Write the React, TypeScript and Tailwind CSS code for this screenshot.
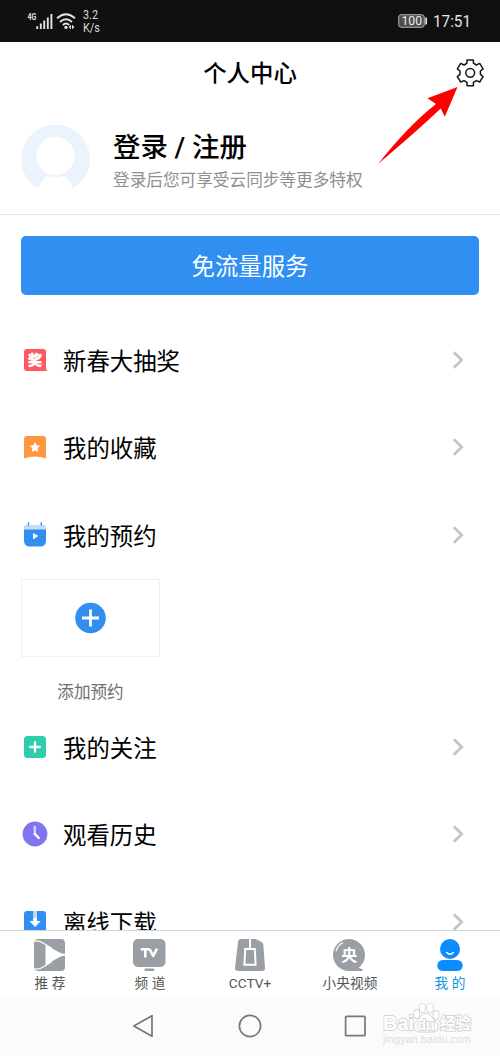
import type { ReactNode } from 'react';

const Chevron = () => (
  <svg className="h-[20px] w-[14px] shrink-0" viewBox="0 0 14 20" fill="none" stroke="#c4c4c9" strokeWidth="2.8">
    <path d="M2.8 2.2 L10.7 10 L2.8 17.8" />
  </svg>
);

function Row({ icon, label }: { icon: ReactNode; label: string }) {
  return (
    <div className="flex h-[87.5px] shrink-0 items-center pr-[35px] pl-[20px]">
      <svg className="h-[30px] w-[30px] shrink-0" viewBox="0 0 30 30">
        {icon}
      </svg>
      <span className="ml-[13px] flex-1 pt-[4px] text-[23.4px] leading-[34px] text-black">{label}</span>
      <Chevron />
    </div>
  );
}

const prizeIcon = (
  <>
    <path d="M7 4 H23 Q26 4 26 7 V23.5 L27.3 26 H7 Q4 26 4 23 V7 Q4 4 7 4Z" fill="#fb5a62" />
    <text x="15" y="20.4" textAnchor="middle" fontSize="14" fontWeight="900" fill="#fff" stroke="#fff" strokeWidth="0.4">奖</text>
  </>
);

const favoriteIcon = (
  <>
    <path d="M7 4 H23 Q26 4 26 7 V26.5 Q15 22.5 4 26.5 V7 Q4 4 7 4Z" fill="#fe983f" />
    <path d="M15 10 L16.6 13.3 L20.2 13.8 L17.6 16.3 L18.2 20 L15 18.2 L11.8 20 L12.4 16.3 L9.8 13.8 L13.4 13.3Z" fill="#fff" />
  </>
);

const bookingIcon = (
  <>
    <path d="M4 9 Q4 5 8 5 H22 Q26 5 26 9 V20.5 Q26 26.5 20 26.5 H10 Q4 26.5 4 20.5Z" fill="#308ff0" />
    <path d="M4 9.5 V8.5 Q4 5 8 5 H22 Q26 5 26 8.5 V9.5Z" fill="#c3dcf8" />
    <path d="M8.5 2.2 V5.5 M21.3 2.2 V5.5" stroke="#308ff0" strokeWidth="1.4" />
    <path d="M13.5 13.7 L17.5 16 L13.5 18.7Z" fill="#fff" stroke="#fff" strokeLinejoin="round" />
  </>
);

const followIcon = (
  <>
    <rect x="4" y="4" width="22" height="22" rx="3.5" fill="#2eceaa" />
    <path d="M15 10.3 V19.7 M10.2 15 H19.8" stroke="#fff" strokeWidth="2.3" strokeLinecap="round" />
  </>
);

const historyIcon = (
  <>
    <circle cx="15" cy="15" r="12.4" fill="#8074f1" />
    <path d="M14.8 8 V15" stroke="#d4d0ff" strokeWidth="2.4" strokeLinecap="round" />
    <path d="M14.8 15 L18.8 19" stroke="#fff" strokeWidth="2.4" strokeLinecap="round" />
  </>
);

const downloadIcon = (
  <>
    <rect x="4" y="4" width="22" height="22" rx="3" fill="#308ff0" />
    <rect x="13.2" y="4" width="3.8" height="9" fill="#c3dcf8" />
    <path d="M13.2 11 H17 V14 H20.8 L15.1 20 L9.4 14 H13.2Z" fill="#fff" />
  </>
);

function Tab({ icon, label, active }: { icon: ReactNode; label: string; active?: boolean }) {
  return (
    <div className="flex w-[100px] flex-col items-center pt-[6px]">
      <svg className="h-[36px] w-[36px]" viewBox="0 0 36 36">
        {icon}
      </svg>
      <span className={active ? 'text-[13.7px] leading-[20px] whitespace-pre text-[#1296db]' : 'text-[13.7px] leading-[20px] whitespace-pre text-[#555]'}>
        {label}
      </span>
    </div>
  );
}

function StatusBar() {
  return (
    <header className="flex h-[42px] shrink-0 items-center bg-[#101010] pr-[28px] pl-[27px] text-[#e4e4e4]">
      <svg className="h-[20px] w-[50px]" viewBox="0 0 50 20">
        <text x="0.5" y="9.3" fontSize="9" fontWeight="700" fill="#e4e4e4" textLength="8.7" lengthAdjust="spacingAndGlyphs">4G</text>
        <path d="M10.2 15.2 V18 M13.8 12.5 V18 M17.2 9.5 V18 M20.8 6.5 V18 M24.4 3 V18" stroke="#e4e4e4" strokeWidth="1.9" />
        <g fill="none" stroke="#e4e4e4" strokeWidth="1.9">
          <path d="M30 7.3 Q39 -0.7 48 7.3" />
          <path d="M33 11 Q39 5.5 45 11" />
          <path d="M35.8 14 Q39 11 42.2 14" />
        </g>
        <circle cx="39" cy="16.4" r="1.7" fill="#e4e4e4" />
        <path d="M44 13.8 V18.2 L41.6 16Z M45 13.8 V18.2 L47.5 16Z" fill="#e4e4e4" />
      </svg>
      <svg className="ml-[6px] h-[28px] w-[24px]" viewBox="0 0 24 28" fill="#d8d8d8" fontSize="12">
        <text x="0" y="11.5" textLength="15" lengthAdjust="spacingAndGlyphs">3.2</text>
        <text x="0" y="24.7" textLength="17" lengthAdjust="spacingAndGlyphs">K/s</text>
      </svg>
      <div className="flex-1" />
      <svg className="h-[14px] w-[30px]" viewBox="0 0 30 14">
        <rect x="0.7" y="0.7" width="25.6" height="12.6" rx="2.5" fill="#4f4f4f" stroke="#b0b0b0" />
        <rect x="27.3" y="3.5" width="1.7" height="7" fill="#e4e4e4" />
        <text x="3.5" y="11.3" fontSize="12" fill="#f0f0f0" textLength="20.5" lengthAdjust="spacingAndGlyphs">100</text>
      </svg>
      <svg className="ml-[4px] h-[20px] w-[40px]" viewBox="0 0 40 20">
        <text x="1" y="16.2" fontSize="17.2" fill="#e4e4e4" textLength="38" lengthAdjust="spacingAndGlyphs">17:51</text>
      </svg>
    </header>
  );
}

export default function App() {
  return (
    <div className="relative flex h-[1056px] w-[500px] flex-col overflow-hidden bg-white font-['Roboto','Noto_Sans_CJK_SC',sans-serif]">
      <StatusBar />
      <div className="flex h-[62px] shrink-0 items-center justify-between pr-[15px] pl-[44px]">
        <h1 className="flex-1 pt-[2px] pl-[1px] text-center text-[23.4px] leading-[34px] font-medium text-black">个人中心</h1>
        <svg className="h-[30px] w-[30px]" viewBox="0 0 30 30" fill="none" stroke="#161616" strokeWidth="1.5" strokeLinejoin="round">
          <path d="M12 1.9 H18.4 V5.2 L21.3 7 L24.7 5.4 L28.1 10.8 L25.4 13 V16.4 L28.1 18.6 L24.7 24 L21.3 22.6 L18.4 24.4 V27.7 H12 V24.4 L9.1 22.6 L5.7 24 L2.3 18.6 L5 16.4 V13 L2.3 10.8 L5.7 5.4 L9.1 7 L12 5.2Z" />
          <circle cx="15.2" cy="14.8" r="4.4" />
        </svg>
      </div>
      <section className="flex h-[111px] shrink-0 items-center border-b border-[#e8e8e8] pl-[20px]">
        <svg className="h-[70px] w-[70px]" viewBox="0 0 70 70">
          <path d="M18.5 65 A34.5 34.5 0 1 1 52.5 65 Q50 56 44 52 Q35.5 55 27 52 Q21 56 18.5 65Z" fill="#ebf3fd" />
          <circle cx="35.5" cy="32" r="19.2" fill="#fff" />
        </svg>
        <div className="ml-[23px] pt-[5px]">
          <div className="text-[27.4px] leading-[38px] font-medium text-black">登录 / 注册</div>
          <div className="mt-[1px] text-[16.65px] leading-[26px] text-[#909090]">登录后您可享受云同步等更多特权</div>
        </div>
      </section>
      <main className="flex h-[715px] shrink-0 flex-col overflow-hidden">
        <button className="mx-[21px] mt-[21px] mb-[21px] h-[59px] shrink-0 rounded-[5px] bg-[#308ff0] pt-[4px] text-[23.4px] text-white">免流量服务</button>
        <Row icon={prizeIcon} label="新春大抽奖" />
        <Row icon={favoriteIcon} label="我的收藏" />
        <Row icon={bookingIcon} label="我的预约" />
        <div className="ml-[21px] flex h-[124.5px] w-[139px] shrink-0 flex-col items-center">
          <div className="flex h-[78px] w-full shrink-0 items-center justify-center border border-[#f1f1f1]">
            <svg className="h-[32px] w-[32px]" viewBox="0 0 32 32">
              <circle cx="15.5" cy="16" r="15.3" fill="#308ff0" />
              <path d="M15.5 7.5 V24.5 M7 16 H24" stroke="#fff" strokeWidth="2.8" />
            </svg>
          </div>
          <span className="mt-[26px] text-[16.6px] leading-[20px] text-[#707070]">添加预约</span>
        </div>
        <Row icon={followIcon} label="我的关注" />
        <Row icon={historyIcon} label="观看历史" />
        <Row icon={downloadIcon} label="离线下载" />
      </main>
      <nav className="flex h-[67px] shrink-0 border-t-[1.5px] border-[#d2d5d8] bg-white">
        <Tab
          label="推 荐"
          icon={
            <>
              <rect x="2" y="2" width="31" height="32" rx="4" fill="#9a9fa6" />
              <path d="M13.5 8 L28 15.8 Q30 16.8 33 16.8 V18.8 Q30 18.8 28 19.8 L13.5 28Z" fill="#fff" />
              <path d="M2 4.5 Q6 2.5 12 6.5 L20 11.5 M2 31.5 Q6 33.5 12 29.5 L20 24.5" fill="none" stroke="#fff" strokeWidth="1.2" />
            </>
          }
        />
        <Tab
          label="频 道"
          icon={
            <>
              <rect x="1" y="2" width="32.5" height="28" rx="5" fill="#9a9fa6" />
              <rect x="12.5" y="31.5" width="10" height="2.4" rx="1" fill="#9a9fa6" />
              <path d="M8.8 12.3 H17.5 M13.3 12.3 V20.5 M17.5 12 L21.2 19 L25 11.5" fill="none" stroke="#fff" strokeWidth="2.6" strokeLinejoin="round" />
            </>
          }
        />
        <Tab
          label="CCTV+"
          icon={
            <>
              <path d="M9 2 H23.5 L29.5 5 Q31 5.8 31.3 7.5 L33 31 Q33.2 34 30 34 H6 Q2.8 34 3 31 L6 5 Q6.4 2 9 2Z" fill="#9a9fa6" />
              <path d="M18 2 V12 M13.2 12 H22.8 L23.6 27.7 H12.4Z" fill="none" stroke="#fff" strokeWidth="2" />
            </>
          }
        />
        <Tab
          label="小央视频"
          icon={
            <>
              <circle cx="17" cy="18" r="16" fill="#9a9fa6" />
              <path d="M26 30 Q27 32 30.5 32 V34 H17 V31Z" fill="#9a9fa6" />
              <path d="M4 14 Q6 8 11 5.5" fill="none" stroke="#fff" strokeWidth="1.2" />
              <text x="17.3" y="24" textAnchor="middle" fontSize="16" fontWeight="700" fill="#fff">央</text>
            </>
          }
        />
        <Tab
          active
          label="我 的"
          icon={
            <>
              <circle cx="18" cy="12" r="10" fill="#0c8cff" />
              <rect x="5.3" y="23" width="25.4" height="11" rx="5.5" fill="#0c8cff" />
              <path d="M14.7 15.5 Q18 18.8 21.3 15.5" fill="none" stroke="#fff" strokeWidth="1.5" strokeLinecap="round" />
            </>
          }
        />
      </nav>
      <footer className="flex h-[59px] shrink-0 items-center bg-[#fbfbfb] pb-[2px] pl-[132px]">
        <svg className="h-[24px] w-[22px]" viewBox="0 0 22 24" fill="none" stroke="#777" strokeWidth="1.7" strokeLinejoin="round">
          <path d="M1.8 12 L20 1.7 V22.3Z" />
        </svg>
        <svg className="ml-[84px] h-[24px] w-[24px]" viewBox="0 0 24 24" fill="none" stroke="#777" strokeWidth="1.7">
          <circle cx="12" cy="12" r="10.6" />
        </svg>
        <svg className="ml-[81px] h-[24px] w-[24px]" viewBox="0 0 24 24" fill="none" stroke="#777" strokeWidth="1.7">
          <rect x="2.6" y="2.3" width="19.4" height="19.4" rx="1" />
        </svg>
        <svg className="ml-[15px] h-[54px] w-[96px]" viewBox="0 0 96 54" fill="#fff" stroke="#d4d4d4" strokeWidth="1.8" paintOrder="stroke" strokeLinejoin="round">
          <text x="1" y="31" fontSize="21" fontWeight="700" textLength="31" lengthAdjust="spacingAndGlyphs" fontFamily="Liberation Sans">Bai</text>
          <path d="M44 15 C39 15 38 20 34.5 23 C30 27 33 33 38 32.5 H50 C56 33 57 27 53.5 23 C50 20 49 15 44 15Z" />
          <ellipse cx="34.5" cy="15" rx="2.6" ry="4" />
          <ellipse cx="40.5" cy="9" rx="2.8" ry="4.2" />
          <ellipse cx="48" cy="9" rx="2.8" ry="4.2" />
          <ellipse cx="54" cy="16" rx="2.6" ry="4" />
          <text x="35.5" y="30.5" fontSize="14" fontWeight="700" fontFamily="Liberation Sans">du</text>
          <text x="58" y="30" fontSize="15.5" fontWeight="700">经验</text>
          <text x="1" y="43.5" fontSize="10.5" textLength="88" stroke="none" fill="#dcdcdc" fontFamily="Liberation Sans">jingyan.baidu.com</text>
        </svg>
      </footer>
      <svg className="pointer-events-none absolute top-[86px] left-[377px] h-[80px] w-[82px]" viewBox="0 0 82 80" fill="#ff0000">
        <path d="M1.3 77.7 Q31 40 59 18 L50.5 12.3 L80.5 1 L67.8 30.8 L63.7 22.5 Q40 45 1.3 77.7Z" />
      </svg>
    </div>
  );
}
